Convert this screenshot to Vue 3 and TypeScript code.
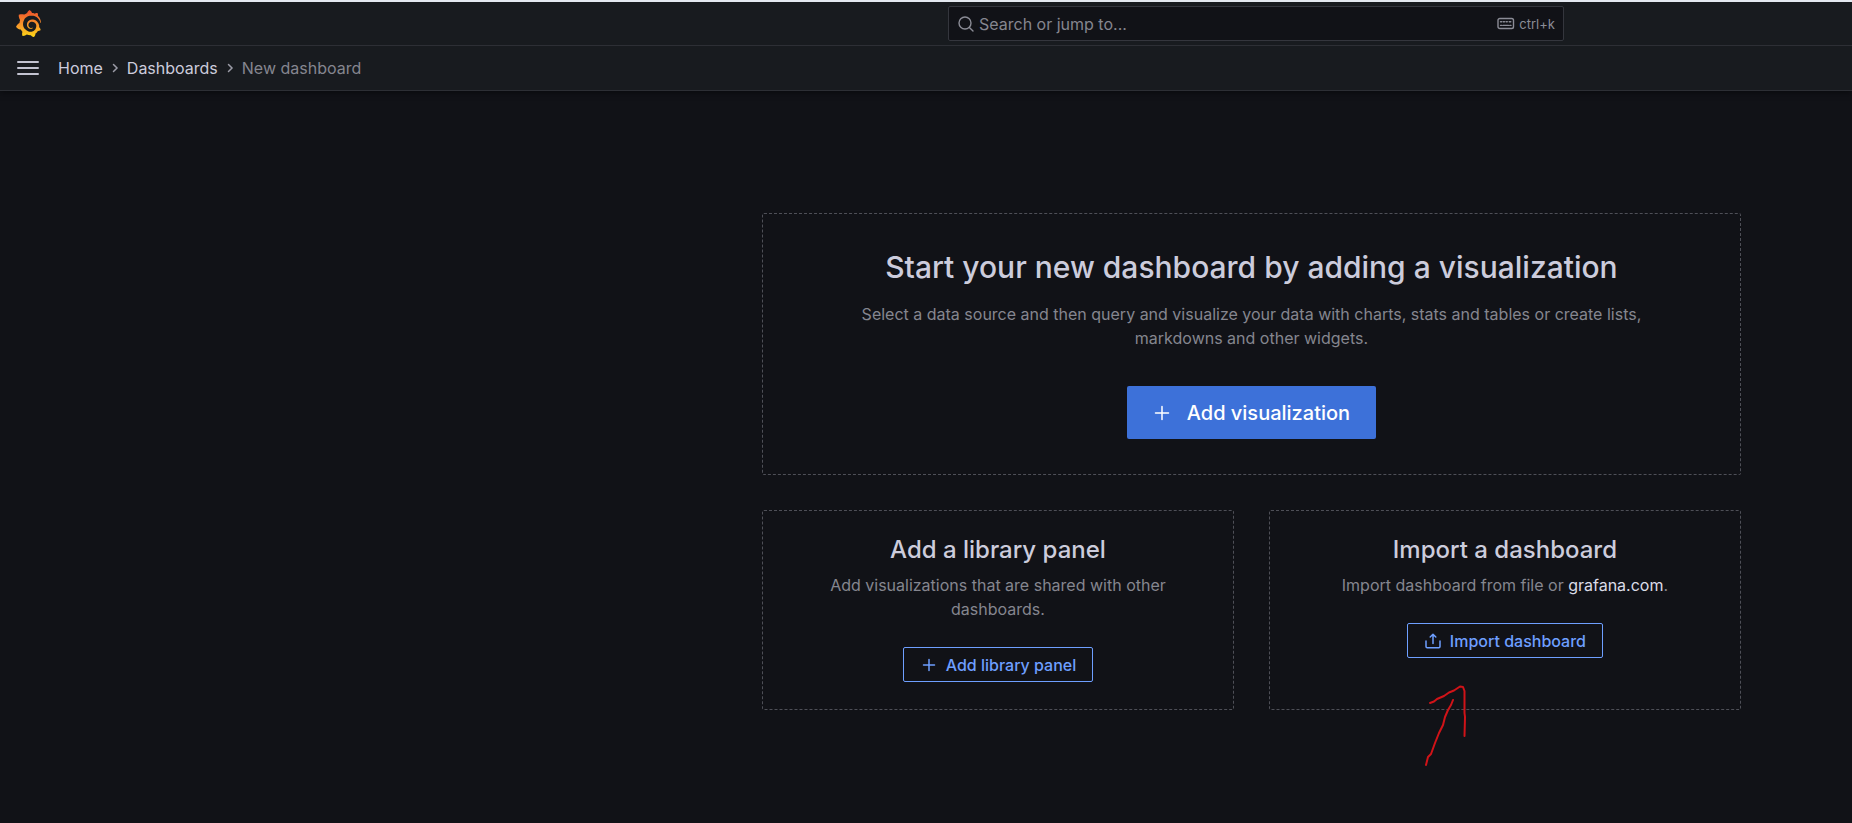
<script setup lang="ts">
import { ref } from 'vue'

interface Crumb {
  label: string
  href?: string
}

const crumbs: Crumb[] = [
  { label: 'Home', href: '#home' },
  { label: 'Dashboards', href: '#dashboards' },
  { label: 'New dashboard' },
]

const query = ref('')
</script>

<template>
  <div class="page">
    <header class="header">
      <div class="topbar">
        <a class="logo" href="#home" aria-label="Grafana">
          <svg width="27" height="27" viewBox="0 0 24 24" aria-hidden="true">
            <defs>
              <linearGradient id="flame" x1="0" y1="1" x2="0" y2="0">
                <stop offset="0" stop-color="#fcd814" />
                <stop offset="0.35" stop-color="#f9a328" />
                <stop offset="1" stop-color="#ee4f2c" />
              </linearGradient>
            </defs>
            <path
              fill="url(#flame)"
              d="M23.02 10.59a8.578 8.578 0 0 0-.862-3.034 8.911 8.911 0 0 0-1.789-2.445c.337-1.342-.413-2.505-.413-2.505-1.292-.08-2.113.4-2.416.62-.052-.02-.102-.044-.154-.064-.22-.089-.446-.172-.677-.247-.231-.073-.47-.14-.711-.197a9.867 9.867 0 0 0-.875-.161C14.557.753 12.94 0 12.94 0c-1.804 1.145-2.147 2.744-2.147 2.744l-.018.093c-.098.029-.2.057-.298.088-.138.042-.275.094-.413.143-.138.055-.275.107-.41.166a8.869 8.869 0 0 0-1.557.87l-.063-.029c-2.497-.955-4.716.195-4.716.195-.203 2.658.996 4.33 1.235 4.636a11.608 11.608 0 0 0-.607 2.635C1.636 12.677.953 15.014.953 15.014c1.926 2.214 4.171 2.351 4.171 2.351.003-.002.006-.002.006-.005.285.509.615.994.986 1.446.156.19.32.371.488.548-.704 2.009.099 3.68.099 3.68 2.144.08 3.553-.937 3.849-1.173a9.784 9.784 0 0 0 3.164.501h.08l.055-.003.107-.002.103-.005.003.002c1.01 1.44 2.788 1.646 2.788 1.646 1.264-1.332 1.337-2.653 1.337-2.94v-.058c0-.02-.003-.039-.003-.06.265-.187.52-.387.758-.6a7.875 7.875 0 0 0 1.415-1.7c1.43.083 2.437-.885 2.437-.885-.236-1.49-1.085-2.216-1.264-2.354l-.018-.013-.016-.013a.217.217 0 0 1-.031-.02c.008-.092.016-.18.02-.27.011-.162.016-.323.016-.48v-.253l-.005-.098-.008-.135a1.891 1.891 0 0 0-.01-.13c-.003-.042-.008-.083-.013-.125l-.016-.124-.018-.122a6.215 6.215 0 0 0-2.032-3.73 6.015 6.015 0 0 0-3.222-1.46 6.292 6.292 0 0 0-.85-.048l-.107.002h-.063l-.044.003-.104.008a4.777 4.777 0 0 0-3.335 1.695c-.332.4-.592.84-.768 1.297a4.594 4.594 0 0 0-.312 1.817l.003.091c.005.055.007.11.013.164a3.615 3.615 0 0 0 .698 1.82 3.53 3.53 0 0 0 1.827 1.282c.33.098.66.14.971.137.039 0 .078 0 .114-.002l.063-.003c.02 0 .041-.003.062-.003.034-.002.065-.007.099-.01.007 0 .018-.003.028-.003l.031-.005.06-.008a1.18 1.18 0 0 0 .112-.02c.036-.008.072-.013.109-.024a2.634 2.634 0 0 0 .914-.415c.028-.02.056-.041.085-.065a.248.248 0 0 0 .039-.35.244.244 0 0 0-.309-.06l-.078.042c-.09.044-.184.083-.283.116a2.476 2.476 0 0 1-.475.096c-.028.003-.054.006-.083.006l-.083.002c-.026 0-.054 0-.08-.002l-.102-.006h-.012l-.024.006c-.016-.003-.031-.003-.044-.006-.031-.002-.06-.007-.091-.01a2.59 2.59 0 0 1-.724-.213 2.557 2.557 0 0 1-.667-.438 2.52 2.52 0 0 1-.805-1.475 2.306 2.306 0 0 1-.029-.444l.006-.122v-.023l.002-.031c.003-.021.003-.04.005-.06a3.163 3.163 0 0 1 1.352-2.29 3.12 3.12 0 0 1 .937-.43 2.946 2.946 0 0 1 .776-.101h.06l.07.002.045.003h.026l.07.005a4.041 4.041 0 0 1 1.635.49 3.94 3.94 0 0 1 1.602 1.662 3.77 3.77 0 0 1 .397 1.414l.005.076.003.075c.002.026.002.05.002.075 0 .024.003.052 0 .07v.065l-.002.073-.008.174a6.195 6.195 0 0 1-.08.639 5.1 5.1 0 0 1-.267.927 5.31 5.31 0 0 1-.624 1.13 5.052 5.052 0 0 1-3.237 2.014 4.82 4.82 0 0 1-.649.066l-.039.003h-.287a6.607 6.607 0 0 1-1.716-.265 6.776 6.776 0 0 1-3.4-2.274 6.75 6.75 0 0 1-.746-1.15 6.616 6.616 0 0 1-.714-2.596l-.005-.083-.002-.02v-.056l-.003-.073v-.096l-.003-.104v-.07l.003-.163c.008-.22.026-.45.054-.678a8.707 8.707 0 0 1 .28-1.355c.128-.444.286-.872.473-1.277a7.04 7.04 0 0 1 1.456-2.1 5.925 5.925 0 0 1 .953-.763c.169-.111.343-.213.524-.306.089-.05.182-.091.273-.135.047-.02.093-.042.138-.062a7.177 7.177 0 0 1 .714-.267l.145-.045c.049-.015.098-.026.148-.041.098-.029.197-.052.296-.076.049-.013.1-.02.15-.033l.15-.032.151-.028.076-.013.075-.01.153-.024c.057-.01.114-.013.171-.023l.169-.021c.036-.003.073-.008.106-.01l.073-.008.036-.003.042-.002c.057-.003.114-.008.171-.01l.086-.006h.023l.037-.003.145-.007a7.999 7.999 0 0 1 1.708.125 7.917 7.917 0 0 1 2.048.68 8.253 8.253 0 0 1 1.672 1.09l.09.077.089.078c.06.052.114.107.171.159.057.052.112.106.166.16.052.055.107.107.159.164a8.671 8.671 0 0 1 1.41 1.978c.012.026.028.052.04.078l.04.078.075.156c.023.051.05.1.07.153l.065.15a8.848 8.848 0 0 1 .45 1.34.19.19 0 0 0 .201.142.186.186 0 0 0 .172-.184c.01-.246.002-.532-.024-.856z"
            />
          </svg>
        </a>
        <div class="search">
          <svg class="stroke" width="18" height="18" viewBox="0 0 18 18" aria-hidden="true">
            <circle cx="8" cy="8" r="6" />
            <path d="M12.4 12.4L16 16" />
          </svg>
          <input v-model="query" type="text" placeholder="Search or jump to..." aria-label="Search or jump to" />
          <span class="shortcut">
            <svg class="stroke" width="18" height="13" viewBox="0 0 18 13" aria-hidden="true">
              <rect x="1" y="1.5" width="15.5" height="10" rx="1.8" />
              <path d="M3.5 4.7h1.2M6.3 4.7h1.2M9.1 4.7h1.2M12.2 4.7h1.6M3.5 8.4h1.2M6 8.4h5.5M12.8 8.4h1.2" />
            </svg>
            ctrl+k
          </span>
        </div>
      </div>
      <div class="navbar">
        <button class="menu" type="button" aria-label="Open menu">
          <svg width="22" height="16" viewBox="0 0 22 16" aria-hidden="true">
            <path d="M1 2h20M1 8h20M1 14h20" />
          </svg>
        </button>
        <nav aria-label="Breadcrumbs">
          <ol class="crumbs">
            <li v-for="(crumb, i) in crumbs" :key="crumb.label">
              <svg v-if="i > 0" class="chevron" width="8" height="10" viewBox="0 0 8 10" aria-hidden="true">
                <path d="M2.5 1.5L6 5L2.5 8.5" />
              </svg>
              <a v-if="crumb.href" :href="crumb.href">{{ crumb.label }}</a>
              <span v-else aria-current="page">{{ crumb.label }}</span>
            </li>
          </ol>
        </nav>
      </div>
    </header>

    <main class="content">
      <section class="card hero">
        <h1>Start your new dashboard by adding a visualization</h1>
        <p>
          Select a data source and then query and visualize your data with charts, stats and tables or create lists,
          markdowns and other widgets.
        </p>
        <button class="btn primary" type="button">
          <svg width="18" height="18" viewBox="0 0 18 18" aria-hidden="true">
            <path d="M9 2.5v13M2.5 9h13" />
          </svg>
          Add visualization
        </button>
      </section>

      <section class="card">
        <h2>Add a library panel</h2>
        <p>Add visualizations that are shared with other dashboards.</p>
        <button class="btn outline" type="button">
          <svg width="18" height="18" viewBox="0 0 18 18" aria-hidden="true">
            <path d="M9 3.5v11M3.5 9h11" />
          </svg>
          Add library panel
        </button>
      </section>

      <section class="card">
        <h2>Import a dashboard</h2>
        <p>Import dashboard from file or <a href="#grafana-com">grafana.com</a>.</p>
        <button class="btn outline" type="button">
          <svg width="18" height="18" viewBox="0 0 18 18" aria-hidden="true">
            <path d="M9 11.5V2.5M6.2 5L9 2.2L11.8 5M2 9v5.5a1.2 1.2 0 0 0 1.2 1.2h11.6a1.2 1.2 0 0 0 1.2-1.2V9" />
          </svg>
          Import dashboard
        </button>
        <svg class="arrow" width="44" height="84" viewBox="0 0 44 84" aria-hidden="true">
          <path d="M7 20L11 18.500L14 16L21 13L26 9.500L31 7.500L37 3.500L40 4L41.500 8L41.500 30L42 34L41.500 53" />
          <path d="M30 17L28 22L25 27L22 34L20 42L16 50L12 60L8 71L5 74L3 82" />
        </svg>
      </section>
    </main>
  </div>
</template>

<style>
body {
  margin: 0;
  background: #111217;
}
</style>

<style scoped>
.page {
  min-height: 100vh;
  box-sizing: border-box;
  background: #111217;
  color: #ccccdc;
  font-family: Inter, "Liberation Sans", sans-serif;
  font-size: 16px;
  line-height: 24px;
}

.header {
  background: #181b1f;
  border-top: 2px solid #e4e9f0;
  border-bottom: 1px solid #2d2f35;
  box-shadow: 0 1px 6px #08090c;
}

.topbar {
  display: grid;
  grid-template-columns: 948fr 616fr 288fr;
  align-items: center;
  height: 43px;
  border-bottom: 1px solid #2d2f35;
}

.logo {
  display: flex;
  padding-left: 15px;
}

.search {
  display: flex;
  align-items: center;
  gap: 4px;
  height: 35px;
  box-sizing: border-box;
  padding: 0 8px;
  border: 1px solid #34363d;
  border-radius: 2px;
  background: #111217;
  color: #8b8c96;
}

.search input {
  flex: 1;
  min-width: 0;
  height: 24px;
  padding: 0;
  border: 0;
  outline: 0;
  background: transparent;
  color: #ccccdc;
  font: inherit;
}

.search input::placeholder {
  color: #85868f;
  opacity: 1;
}

.shortcut {
  display: flex;
  align-items: center;
  gap: 4px;
  font-size: 13px;
}

.stroke {
  fill: none;
  stroke: currentColor;
  stroke-width: 1.4;
  stroke-linecap: round;
}

.navbar {
  display: flex;
  align-items: center;
  gap: 19px;
  height: 44px;
  padding: 0 17px;
}

.menu {
  display: flex;
  padding: 0;
  border: 0;
  background: none;
}

.menu svg {
  stroke: #c2c3d0;
  stroke-width: 2;
  stroke-linecap: round;
}

.crumbs {
  display: flex;
  margin: 0;
  padding: 0;
  list-style: none;
}

.crumbs li {
  display: flex;
  align-items: center;
  color: #85868f;
}

.crumbs a {
  color: #ccccdc;
  text-decoration: none;
}

.chevron {
  margin: 0 8px;
  fill: none;
  stroke: #9a9ba6;
  stroke-width: 1.5;
  stroke-linecap: round;
}

.content {
  display: grid;
  grid-template-columns: 1fr 1fr;
  gap: 35px;
  padding: 122px 6% 0 41.1447%;
}

.card {
  position: relative;
  display: flex;
  flex-direction: column;
  align-items: center;
  box-sizing: border-box;
  padding: 25px 60px 27px;
  border: 1px dashed #4e4f57;
  border-radius: 2px;
  text-align: center;
}

.hero {
  grid-column: 1 / -1;
  padding: 35px 96px;
}

h1,
h2,
p {
  margin: 0;
}

h1 {
  font-size: 30px;
  font-weight: 500;
  line-height: 36px;
}

h2 {
  font-size: 24px;
  font-weight: 500;
  line-height: 28px;
}

p {
  color: #85868f;
}

.card p {
  margin: 9px 0 26px;
}

.hero p {
  margin: 17px 0 36px;
}

p a {
  color: #dcdce8;
  text-decoration: none;
}

.btn {
  display: flex;
  align-items: center;
  box-sizing: border-box;
  border-radius: 2px;
  font-family: inherit;
  font-weight: 500;
}

.btn svg {
  fill: none;
  stroke: currentColor;
  stroke-width: 1.5;
  stroke-linecap: round;
  stroke-linejoin: round;
}

.primary {
  gap: 16px;
  height: 53px;
  padding: 0 26px;
  border: 0;
  background: #3d71d9;
  color: #fff;
  font-size: 20px;
}

.outline {
  gap: 8px;
  height: 35px;
  padding: 0 16px;
  border: 1px solid #6e9fff;
  background: transparent;
  color: #6e9fff;
  font-size: 16px;
}

.arrow {
  position: absolute;
  left: 153px;
  top: 172px;
  fill: none;
  stroke: #d01318;
  stroke-width: 2;
  stroke-linecap: round;
  stroke-linejoin: round;
}
</style>
